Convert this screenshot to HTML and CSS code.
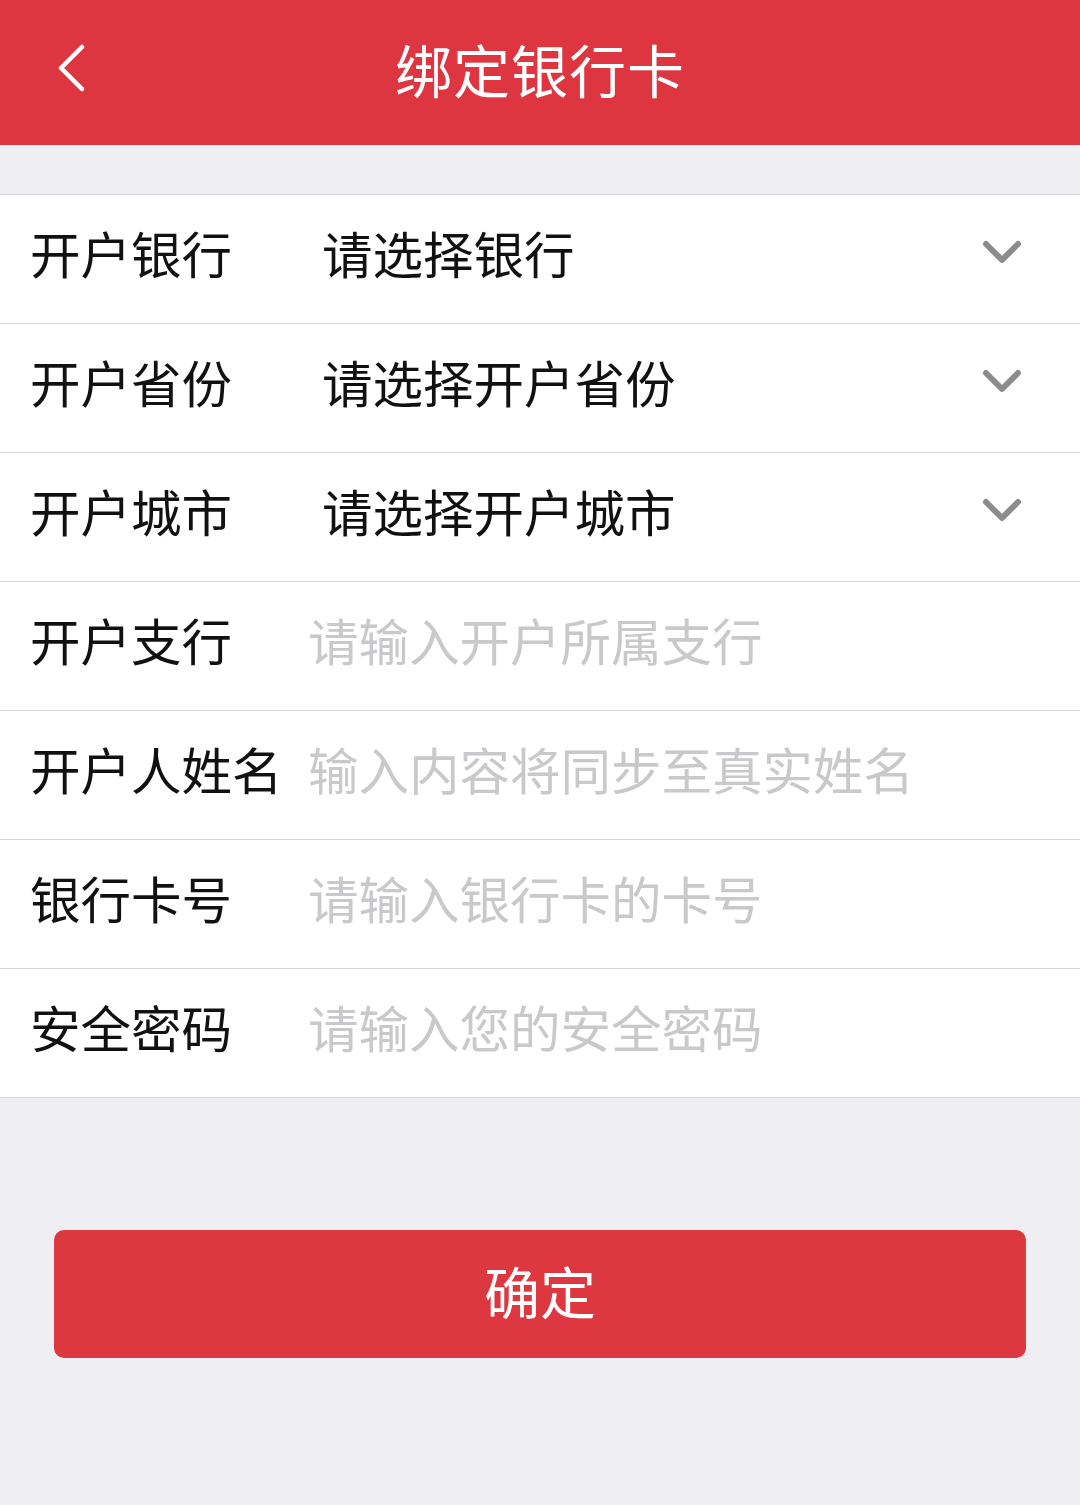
FILE: index.html
```html
<!DOCTYPE html>
<html lang="zh-CN">
<head>
    <meta charset="UTF-8">
    <meta name="viewport" content="width=device-width, initial-scale=1.0">
    <title>绑定银行卡</title>
    <link rel="stylesheet" href="styles.css">
</head>
<body>
    <header class="top-bar">
        <a class="back" href="#">
            <svg width="30" height="48" viewBox="0 0 30 48"><path d="M26 3 L5 24 L26 45" fill="none" stroke="#fff" stroke-width="4.5" stroke-linecap="round" stroke-linejoin="round"/></svg>
        </a>
        <h1 class="title">绑定银行卡</h1>
    </header>

    <form class="card-form">
        <div class="rows">
            <div class="row">
                <span class="label">开户银行</span>
                <span class="value select">请选择银行</span>
                <svg class="chevron" width="40" height="26" viewBox="0 0 40 26"><path d="M4 4 L20 20 L36 4" fill="none" stroke="#8c8c8c" stroke-width="6" stroke-linecap="round" stroke-linejoin="round"/></svg>
            </div>
            <div class="row">
                <span class="label">开户省份</span>
                <span class="value select">请选择开户省份</span>
                <svg class="chevron" width="40" height="26" viewBox="0 0 40 26"><path d="M4 4 L20 20 L36 4" fill="none" stroke="#8c8c8c" stroke-width="6" stroke-linecap="round" stroke-linejoin="round"/></svg>
            </div>
            <div class="row">
                <span class="label">开户城市</span>
                <span class="value select">请选择开户城市</span>
                <svg class="chevron" width="40" height="26" viewBox="0 0 40 26"><path d="M4 4 L20 20 L36 4" fill="none" stroke="#8c8c8c" stroke-width="6" stroke-linecap="round" stroke-linejoin="round"/></svg>
            </div>
            <div class="row">
                <span class="label">开户支行</span>
                <input class="value" type="text" placeholder="请输入开户所属支行">
            </div>
            <div class="row">
                <span class="label">开户人姓名</span>
                <input class="value" type="text" placeholder="输入内容将同步至真实姓名">
            </div>
            <div class="row">
                <span class="label">银行卡号</span>
                <input class="value" type="text" placeholder="请输入银行卡的卡号">
            </div>
            <div class="row">
                <span class="label">安全密码</span>
                <input class="value" type="password" placeholder="请输入您的安全密码">
            </div>
        </div>

        <button type="submit" class="submit">确定</button>
    </form>
</body>
</html>
```

FILE: styles.css
```css
body {
    margin: 0;
    background: #efeef2;
    font-family: "Noto Sans CJK SC", "Noto Sans", sans-serif;
    color: #111;
}
.top-bar {
    height: 145px;
    background: #dd3640;
    display: flex;
    align-items: center;
    justify-content: center;
    position: relative;
}
.back {
    position: absolute;
    left: 56px;
    top: 44px;
    display: block;
}
.title {
    margin: 0;
    color: #fff;
    font-size: 57px;
    font-weight: normal;
    letter-spacing: 1px;
    margin-top: -10px;
}
.card-form {
    margin-top: 49px;
}
.rows {
    background: #fff;
    border-top: 1px solid #d8d8dc;
}
.row {
    height: 128px;
    border-bottom: 1px solid #d8d8dc;
    display: flex;
    align-items: center;
    padding: 0 58px 0 30px;
}
.label {
    width: 278px;
    flex-shrink: 0;
    font-size: 50.5px;
    margin-top: -14px;
}
.value {
    flex: 1;
    font-size: 50.5px;
    font-family: inherit;
    color: #111;
    margin-top: -14px;
}
.value.select {
    padding-left: 14px;
}
input.value {
    border: none;
    outline: none;
    padding: 0;
    background: transparent;
}
input.value::placeholder {
    color: #c9c9cb;
}
.chevron {
    flex-shrink: 0;
    margin-top: -12px;
}
.submit {
    display: block;
    margin: 132px auto 0;
    width: 972px;
    height: 128px;
    padding: 0 0 10px;
    background: #dd3740;
    color: #fff;
    border: none;
    border-radius: 10px;
    font-family: inherit;
    font-size: 56px;
    cursor: pointer;
}
```
